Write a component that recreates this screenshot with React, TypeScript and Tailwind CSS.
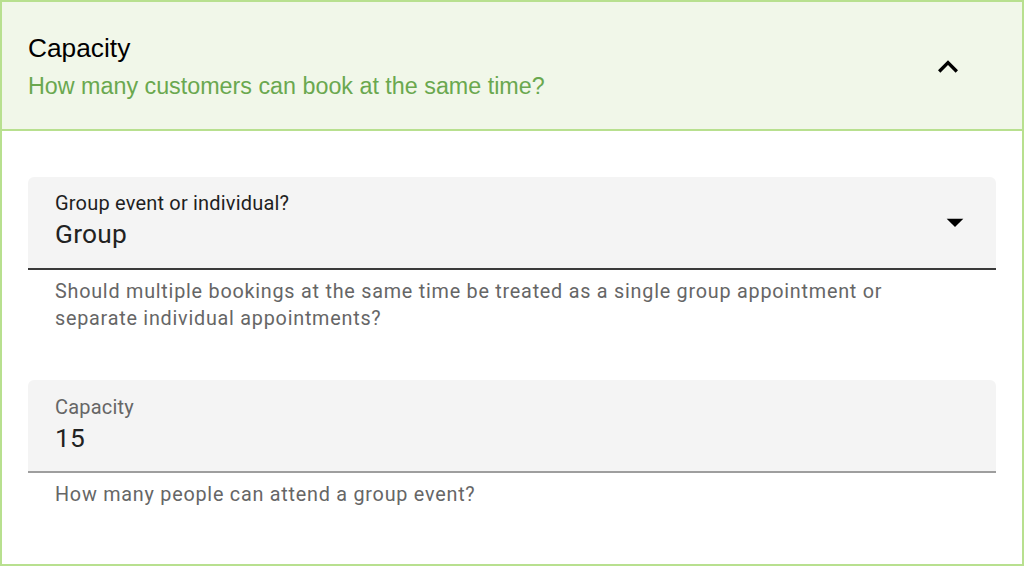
import React from "react";

export default function App() {
  return (
    <div className="w-[1024px] h-[566px] bg-white border-2 border-[#b8e08f] flex flex-col overflow-hidden">
      <div className="h-[129px] shrink-0 bg-[#f1f7e9] border-b-2 border-[#b8e08f] flex justify-between pl-[26px] pr-[54px]" style={{ fontFamily: '"Liberation Sans", Arial, sans-serif' }}>
        <div className="pt-[31px]">
          <div className="text-[26.3px] leading-[30px] text-black">Capacity</div>
          <div className="mt-[8px] text-[23.3px] leading-[30px] text-[#6aa84f]">How many customers can book at the same time?</div>
        </div>
        <svg className="mt-[45px]" width="40" height="40" viewBox="0 0 24 24" fill="black">
          <path d="M12 8l-6 6 1.41 1.41L12 10.83l4.59 4.58L18 14z" />
        </svg>
      </div>
      <div className="px-[26px] pt-[46px]" style={{ fontFamily: 'Roboto, "Noto Sans", sans-serif' }}>
        <div className="h-[93px] bg-[#f4f4f4] rounded-t-[6px] border-b-2 border-[#3a3a3a] flex justify-between pl-[27px] pr-[21px]">
          <div className="pt-[14px]">
            <div className="text-[20px] leading-[24px] tracking-[0.19px] text-[#1f1f1f]">Group event or individual?</div>
            <div className="mt-[3px] text-[26.3px] leading-[32px] tracking-[0.25px] text-[#222]">Group</div>
          </div>
          <svg className="mt-[25px]" width="40" height="40" viewBox="0 0 24 24" fill="black">
            <path d="M7 10l5 5 5-5z" />
          </svg>
        </div>
        <div className="pt-[8px] pl-[27px] pr-[80px] text-[19.8px] leading-[27px] tracking-[0.76px] text-[#666]">
          Should multiple bookings at the same time be treated as a single group appointment or separate individual appointments?
        </div>
        <div className="mt-[48px] h-[93px] bg-[#f4f4f4] rounded-t-[6px] border-b-2 border-[#9e9e9e] pl-[27px]">
          <div className="pt-[15px]">
            <div className="text-[20px] leading-[24px] tracking-[0.19px] text-[#666]">Capacity</div>
            <div className="mt-[3px] text-[26.3px] leading-[32px] tracking-[0.25px] text-[#222]">15</div>
          </div>
        </div>
        <div className="pt-[8px] pl-[27px] text-[19.8px] leading-[27px] tracking-[0.76px] text-[#666]">
          How many people can attend a group event?
        </div>
      </div>
    </div>
  );
}
